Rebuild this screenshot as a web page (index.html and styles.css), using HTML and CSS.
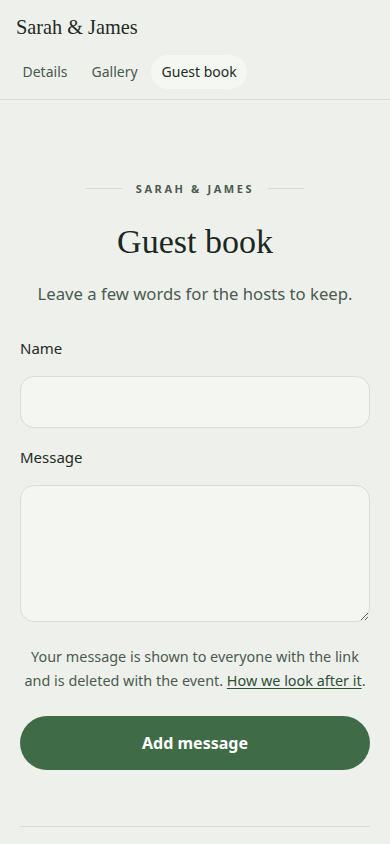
FILE: index.html
```html
<!DOCTYPE html>
<html lang="en">
<head>
    <meta charset="UTF-8">
    <meta name="viewport" content="width=device-width, initial-scale=1.0">
    <title>Sarah &amp; James — Guest book</title>
    <link rel="stylesheet" href="styles.css">
</head>
<body>
    <header class="site-header">
        <div class="brand">Sarah &amp; James</div>
        <nav class="tabs">
            <a class="tab" href="#">Details</a>
            <a class="tab" href="#">Gallery</a>
            <a class="tab active" href="#">Guest book</a>
        </nav>
    </header>

    <main class="page">
        <div class="eyebrow">
            <span class="rule"></span>
            <span>Sarah &amp; James</span>
            <span class="rule"></span>
        </div>
        <h1>Guest book</h1>
        <p class="lead">Leave a few words for the hosts to keep.</p>

        <form class="guest-form">
            <label class="field">
                <span class="field-label">Name</span>
                <input type="text" class="input">
            </label>
            <label class="field">
                <span class="field-label">Message</span>
                <textarea class="input textarea"></textarea>
            </label>
            <p class="note">Your message is shown to everyone with the link and is deleted with the event. <a href="#">How we look after it</a>.</p>
            <button type="button" class="submit">Add message</button>
        </form>

        <hr class="divider">
    </main>
</body>
</html>
```

FILE: styles.css
```css
body {
    margin: 0;
    background: #eef1eb;
    color: #1f2b25;
    font-family: "Noto Sans", "Open Sans", sans-serif;
}

.site-header {
    border-bottom: 1px solid #d9ddd5;
    padding: 14px 0 10px;
}

.brand {
    font-family: "Liberation Serif", "Times New Roman", serif;
    font-size: 20.3px;
    color: #1f2b25;
    padding: 0 16px;
    line-height: 26px;
}

.tabs {
    display: flex;
    gap: 3px;
    padding: 15px 12px 0;
}

.tab {
    font-size: 14px;
    color: #4b574f;
    text-decoration: none;
    padding: 7px 10.5px;
    line-height: 20px;
    border-radius: 17px;
}

.tab.active {
    background: #f5f7f2;
    color: #1f2b25;
}

.page {
    padding: 81px 20px 0;
}

.eyebrow {
    display: flex;
    align-items: center;
    justify-content: center;
    gap: 14px;
    font-size: 11px;
    font-weight: 700;
    letter-spacing: 2.6px;
    text-transform: uppercase;
    color: #4c5a50;
}

.eyebrow .rule {
    width: 36px;
    height: 1px;
    background: #d6dad2;
}

h1 {
    font-family: "Liberation Serif", "Times New Roman", serif;
    font-weight: 400;
    font-size: 34px;
    text-align: center;
    margin: 24px 0 0;
    color: #1b2822;
    line-height: 44px;
}

.lead {
    text-align: center;
    font-size: 16.7px;
    color: #4b5a50;
    margin: 18px 0 0;
}

.guest-form {
    margin-top: 33px;
}

.field {
    display: block;
    margin-bottom: 19px;
}

.field-label {
    display: block;
    font-size: 15px;
    line-height: 20px;
    margin-bottom: 18px;
    color: #1f2b25;
}

.input {
    display: block;
    box-sizing: border-box;
    width: 100%;
    height: 52px;
    border: 1px solid #d9ddd4;
    border-radius: 14px;
    background: #f4f7f1;
    font: inherit;
    padding: 12px 14px;
}

.textarea {
    height: 137px;
    resize: vertical;
}

.note {
    text-align: center;
    font-size: 14.4px;
    line-height: 24px;
    color: #4b5a50;
    margin: 0 0 23px;
    padding-top: 4px;
}

.note a {
    color: #2f4f38;
    text-underline-offset: 2px;
}

.submit {
    display: block;
    width: 100%;
    height: 54px;
    border: none;
    border-radius: 27px;
    background: #406b47;
    color: #fff;
    font: inherit;
    font-size: 16px;
    font-weight: 700;
}

.divider {
    border: none;
    border-top: 1px solid #d9ddd5;
    margin: 56px 0 0;
}
```
